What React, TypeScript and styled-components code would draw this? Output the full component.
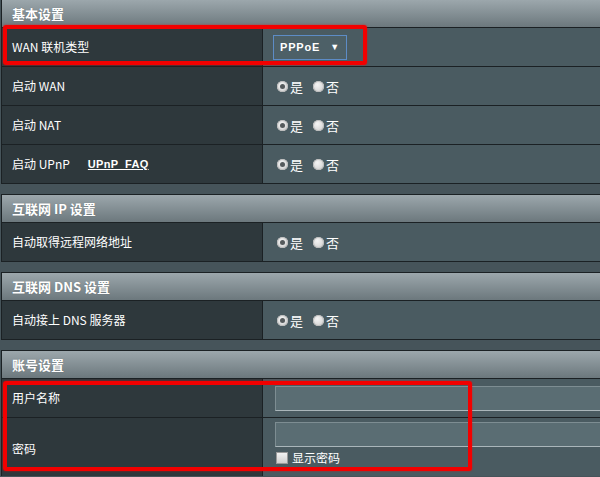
import React from "react";
import styled, { createGlobalStyle } from "styled-components";

const Global = createGlobalStyle`
  html, body { margin: 0; padding: 0; }
  body {
    background: #46545a;
    width: 600px;
    height: 477px;
    overflow: hidden;
    font-family: "Noto Sans CJK SC", "Liberation Sans", sans-serif;
    color: #ffffff;
  }
`;

const Page = styled.div`
  position: relative;
  width: 600px;
  height: 477px;
  overflow: hidden;
  margin-top: -1px;
`;

const Section = styled.div`
  width: 640px;
  margin-left: 1px;
  margin-bottom: 10px;
  border: 1px solid #1b2124;
  background: #475a60;
`;

const Header = styled.div`
  height: 27px;
  display: flex;
  align-items: center;
  padding-left: 10px;
  background: linear-gradient(#9ca7ac, #6c787d);
  font-size: 13px;
  font-weight: bold;
  line-height: 1;
  color: #ffffff;
  text-shadow: 0 0 1px rgba(0, 0, 0, 0.25);
`;

const Row = styled.div<{ $h?: number }>`
  display: grid;
  grid-template-columns: 261px 1fr;
  height: ${(p) => p.$h ?? 38}px;
  border-top: 1px solid #1b2124;
`;

const Label = styled.div`
  display: flex;
  align-items: center;
  padding-left: 10px;
  background: #2e383c;
  border-right: 1px solid #1b2124;
  font-size: 12px;
  line-height: 1;
  color: #ffffff;
  gap: 18px;
`;

const Value = styled.div<{ $pad?: number; $top?: boolean }>`
  display: flex;
  flex-direction: ${(p) => (p.$top ? "column" : "row")};
  align-items: ${(p) => (p.$top ? "flex-start" : "center")};
  padding-left: ${(p) => p.$pad ?? 14}px;
  padding-top: ${(p) => (p.$top ? 4 : 0)}px;
  background: #4a5b61;
  font-size: 12px;
  line-height: 1;
`;

const FaqLink = styled.span`
  font-size: 11px;
  font-weight: bold;
  text-decoration: underline;
  letter-spacing: 0.3px;
  font-family: "Liberation Sans", sans-serif;
  color: #ffffff;
`;

const Select = styled.div`
  width: 74px;
  height: 25px;
  box-sizing: border-box;
  border: 1px solid #5d8cc6;
  background: #4d6067;
  display: flex;
  align-items: center;
  justify-content: space-between;
  padding: 0 6px 0 6px;
  font-family: "Liberation Sans", sans-serif;
  font-size: 11px;
  font-weight: bold;
  letter-spacing: 0.8px;
  color: #ffffff;
`;

const Arrow = styled.span`
  font-size: 9px;
  color: #ffffff;
`;

const RadioGroup = styled.div`
  display: flex;
  align-items: center;
`;

const RadioDot = styled.span<{ $checked?: boolean }>`
  position: relative;
  display: inline-block;
  width: 11px;
  height: 11px;
  border-radius: 50%;
  background: radial-gradient(circle at 40% 35%, #f4f4f4, #c9c9c9);
  box-shadow: inset 0 0 0 1px #bdbdbd;
  margin-right: 2px;
  &::after {
    content: "";
    display: ${(p) => (p.$checked ? "block" : "none")};
    position: absolute;
    left: 3px;
    top: 3px;
    width: 5px;
    height: 5px;
    border-radius: 50%;
    background: #555a5c;
  }
`;

const RadioText = styled.span`
  font-size: 13px;
  margin-right: 10px;
  color: #ffffff;
`;

const TextBox = styled.div`
  width: 340px;
  height: 25px;
  box-sizing: border-box;
  background: #5a6d73;
  border: 1px solid #7d8d92;
  border-bottom-color: #aab6ba;
  border-right: none;
`;

const CheckRow = styled.div`
  display: flex;
  align-items: center;
  margin-top: 5px;
  margin-left: 1px;
  font-size: 12px;
`;

const CheckBox = styled.span`
  display: inline-block;
  width: 12px;
  height: 12px;
  background: linear-gradient(#f2f2f2, #cfcfcf);
  border: 1px solid #9a9a9a;
  box-sizing: border-box;
  margin-right: 4px;
`;

const Highlight = styled.div<{ $l: number; $t: number; $w: number; $h: number }>`
  position: absolute;
  left: ${(p) => p.$l}px;
  top: ${(p) => p.$t}px;
  width: ${(p) => p.$w}px;
  height: ${(p) => p.$h}px;
  box-sizing: border-box;
  border: 4px solid #f20000;
  border-radius: 3px;
  box-shadow: 0 0 2px rgba(255, 0, 0, 0.7);
  pointer-events: none;
`;

const YesNo: React.FC<{ yes?: boolean }> = ({ yes = true }) => (
  <RadioGroup>
    <RadioDot $checked={yes} />
    <RadioText>是</RadioText>
    <RadioDot $checked={!yes} />
    <RadioText>否</RadioText>
  </RadioGroup>
);

export default function App() {
  return (
    <>
      <Global />
      <Page>
        <Section>
          <Header>基本设置</Header>
          <Row>
            <Label>WAN 联机类型</Label>
            <Value $pad={10}>
              <Select>
                <span>PPPoE</span>
                <Arrow>▼</Arrow>
              </Select>
            </Value>
          </Row>
          <Row>
            <Label>启动 WAN</Label>
            <Value>
              <YesNo />
            </Value>
          </Row>
          <Row>
            <Label>启动 NAT</Label>
            <Value>
              <YesNo />
            </Value>
          </Row>
          <Row>
            <Label>
              <span>启动 UPnP</span>
              <FaqLink>UPnP&nbsp;&nbsp;FAQ</FaqLink>
            </Label>
            <Value>
              <YesNo />
            </Value>
          </Row>
        </Section>

        <Section>
          <Header>互联网 IP 设置</Header>
          <Row>
            <Label>自动取得远程网络地址</Label>
            <Value>
              <YesNo />
            </Value>
          </Row>
        </Section>

        <Section>
          <Header>互联网 DNS 设置</Header>
          <Row>
            <Label>自动接上 DNS 服务器</Label>
            <Value>
              <YesNo />
            </Value>
          </Row>
        </Section>

        <Section>
          <Header>账号设置</Header>
          <Row>
            <Label>用户名称</Label>
            <Value $pad={12}>
              <TextBox />
            </Value>
          </Row>
          <Row $h={62}>
            <Label>密码</Label>
            <Value $pad={12} $top>
              <TextBox />
              <CheckRow>
                <CheckBox />
                <span>显示密码</span>
              </CheckRow>
            </Value>
          </Row>
        </Section>

        <Highlight $l={3} $t={26} $w={364} $h={40} />
        <Highlight $l={3} $t={382} $w={469} $h={90} />
      </Page>
    </>
  );
}
